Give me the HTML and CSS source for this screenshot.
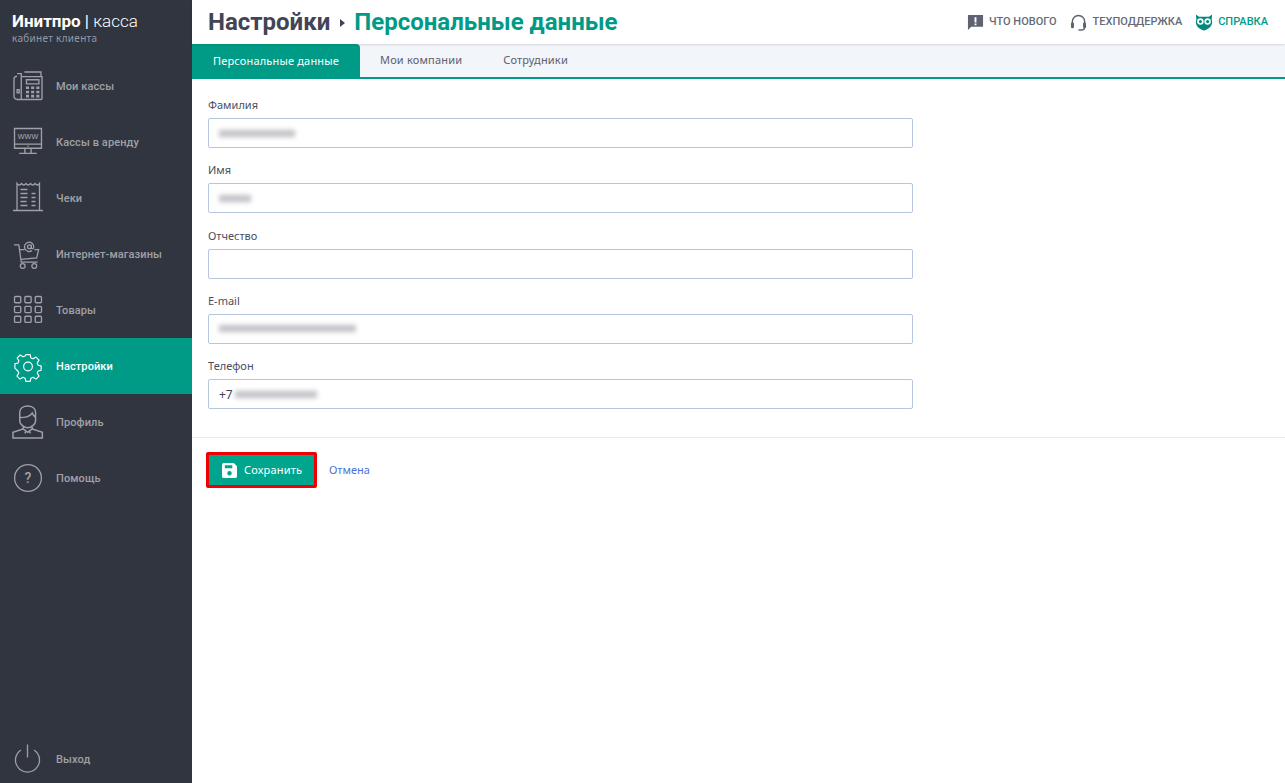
FILE: index.html
```html
<!DOCTYPE html>
<html lang="ru">
<head>
<meta charset="utf-8">
<title>Персональные данные</title>
<link rel="stylesheet" href="styles.css">
</head>
<body>
<div class="app">
  <aside class="sidebar">
    <div class="brand">
      <div class="brand-name"><b>Инитпро</b> <span class="brand-bar">|</span> <span class="brand-light">касса</span></div>
      <div class="brand-sub">кабинет клиента</div>
    </div>
    <nav class="nav">
      <a class="nav-item">
        <svg class="nav-icon" viewBox="2 3 27 27"><path d="M4 7.500h1M9 7.500h1M5 4.500h4v25H5a3 3 0 0 1-3-3V10a3 3 0 0 1 3-3M9 7.500h20v21a1 1 0 0 1-1 1H9M12 3h16v4.500M14 10.500h12v4H14z"/><path d="M5 20h2v3H5z"/><path class="fill" d="M13.500 17h3v2.500h-3zM18.500 17h3v2.500h-3zM23.500 17h3v2.500h-3zM13.500 21h3v2.500h-3zM18.500 21h3v2.500h-3zM23.500 21h3v2.500h-3zM13.500 25h3v2.500h-3zM18.500 25h3v2.500h-3zM23.500 25h3v2.500h-3z"/></svg>
        <span>Мои кассы</span>
      </a>
      <a class="nav-item">
        <svg class="nav-icon" viewBox="2 3 27 27"><path d="M2.500 3.500h26v19h-26zM2.500 18.500h26M12.500 22.500v5M18.500 22.500v5M7 27.500h17"/><path class="fill" d="M15 20h1.500v1H15z"/><text x="15.500" y="14" class="www">www</text></svg>
        <span>Кассы в аренду</span>
      </a>
      <a class="nav-item">
        <svg class="nav-icon" viewBox="2 4 28 28"><path d="M5 30V3.500c1.500 2 3 2 4.500 0 1.500 2 3 2 4.500 0 1.500 2 3 2 4.500 0 1.500 2 3 2 4.500 0 1.500 2 3 2 4.500 0V30M1 30.500h30M8.500 9.500h7M8.500 13.500h7M8.500 17.500h7M8.500 21.500h6M8.500 25.500h7M19.500 13.500h4M19.500 17.500h4M19.500 21.500h4M19.500 25.500h4"/></svg>
        <span>Чеки</span>
      </a>
      <a class="nav-item">
        <svg class="nav-icon" viewBox="1 0 29 29"><path d="M1 5h5l2.500 18h17M7 10h5M22 10h4.500l-2 8.500L8 20"/><circle cx="10" cy="27" r="2.500"/><circle cx="22" cy="27" r="2.500"/><circle cx="17" cy="7" r="2"/><path d="M19 5v3c0 1.500 2.500 1.500 2.500-1A4.800 4.800 0 1 0 19.500 11"/></svg>
        <span>Интернет-магазины</span>
      </a>
      <a class="nav-item">
        <svg class="nav-icon" viewBox="2 3 27 27"><rect x="2.500" y="3.500" width="6" height="6" rx="1"/><rect x="12.500" y="3.500" width="6" height="6" rx="1"/><rect x="22.500" y="3.500" width="6" height="6" rx="1"/><rect x="2.500" y="13" width="6" height="6" rx="1"/><rect x="12.500" y="13" width="6" height="6" rx="1"/><rect x="22.500" y="13" width="6" height="6" rx="1"/><rect x="2.500" y="22.500" width="6" height="6" rx="1"/><rect x="12.500" y="22.500" width="6" height="6" rx="1"/><rect x="22.500" y="22.500" width="6" height="6" rx="1"/></svg>
        <span>Товары</span>
      </a>
      <a class="nav-item active">
        <svg class="nav-icon" viewBox="0 -.5 32 32"><circle cx="16" cy="16" r="5"/><path d="M13.500 3h5l.8 3.800 2.500 1 3.300-2 3.500 3.500-2.100 3.300 1.100 2.500 3.400.8v5l-3.400.8-1.100 2.500 2.100 3.300-3.500 3.500-3.300-2.100-2.500 1-.8 3.600h-5l-.8-3.600-2.500-1-3.300 2.100-3.500-3.500 2.100-3.300-1.100-2.500L1 18.500v-5l3.500-.8 1.100-2.500-2.100-3.300L7 3.400l3.300 2.100 2.500-1z" stroke-linejoin="round" transform="translate(0 -.5)"/></svg>
        <span>Настройки</span>
      </a>
      <a class="nav-item">
        <svg class="nav-icon" viewBox="3.900 4.500 24.800 24.800"><path d="M9 13V8c0-7 14-7 14 0v8c0 3-4 6-7 6s-7-3-7-6v-3c4 0 9-1 11-4 1 2 2 3 3 4"/><path d="M12 21v2l-9 3v5h26v-5l-9-3v-2M12 23l4 3 4-3M14.500 25l-1 2M17.500 25l1 2"/></svg>
        <span>Профиль</span>
      </a>
      <a class="nav-item">
        <svg class="nav-icon" viewBox="2 2 28 28"><circle cx="16" cy="16" r="13.400"/><text x="16" y="21" class="qm">?</text></svg>
        <span>Помощь</span>
      </a>
    </nav>
    <a class="nav-item logout">
      <svg class="nav-icon" viewBox="1.500 3.500 28 28"><path d="M15 3v13M8.500 8.500a12 12 0 1 0 13 0"/></svg>
      <span>Выход</span>
    </a>
  </aside>

  <main class="main">
    <header class="topbar">
      <h1 class="crumbs">
        <span>Настройки</span>
        <svg class="crumb-arrow" viewBox="0 0 5 8"><path d="M0 0l5 4-5 4z"/></svg>
        <span class="crumb-current">Персональные данные</span>
      </h1>
      <div class="links">
        <a class="top-link">
          <svg class="top-icon" viewBox="0 0 18 18"><path d="M1 1h16v12.500H4.500L1 17z"/><path class="cut" d="M8 3.500h2v5.500H8zM8 10h2v2H8z"/></svg>
          <span>ЧТО НОВОГО</span>
        </a>
        <a class="top-link support">
          <svg class="top-icon" viewBox="0 0 18 18"><path class="line" d="M2.500 11V8a6.500 6.500 0 0 1 13 0v3M15.500 14c0 2-1.500 3-4 3H9"/><rect x="1" y="9" width="3.200" height="6" rx="1.200"/><rect x="13.800" y="9" width="3.200" height="6" rx="1.200"/></svg>
          <span>ТЕХПОДДЕРЖКА</span>
        </a>
        <a class="top-link help">
          <svg class="top-icon owl" viewBox="0 0 20 18"><path d="M1 0l3.500 2.500h11L19 0l-.5 6c2 5-1.500 10-8.500 12C3 16-.5 11 1.500 6z"/><circle class="owl-eye" cx="6" cy="8" r="3.600"/><circle class="owl-eye" cx="14" cy="8" r="3.600"/><circle cx="6" cy="8" r="1.700"/><circle cx="14" cy="8" r="1.700"/></svg>
          <span>СПРАВКА</span>
        </a>
      </div>
    </header>

    <div class="tabs">
      <a class="tab active">Персональные данные</a>
      <a class="tab">Мои компании</a>
      <a class="tab">Сотрудники</a>
    </div>

    <form class="form">
      <div class="field">
        <label class="label">Фамилия</label>
        <div class="input"><i class="blur blur-last"></i></div>
      </div>
      <div class="field">
        <label class="label">Имя</label>
        <div class="input"><i class="blur blur-first"></i></div>
      </div>
      <div class="field">
        <label class="label">Отчество</label>
        <div class="input"></div>
      </div>
      <div class="field">
        <label class="label">E-mail</label>
        <div class="input"><i class="blur blur-mail"></i></div>
      </div>
      <div class="field">
        <label class="label">Телефон</label>
        <div class="input"><span class="prefix">+7</span><i class="blur blur-phone"></i></div>
      </div>
    </form>

    <div class="actions">
      <button class="save" type="button">
        <svg class="save-icon" viewBox="0 0 16 16"><path fill-rule="evenodd" d="M2 0h10.500L16 3.500V14a2 2 0 0 1-2 2H2a2 2 0 0 1-2-2V2a2 2 0 0 1 2-2zM3 2.500v3h8v-3zM8 8.500a2.400 2.400 0 1 0 0 4.800 2.400 2.400 0 0 0 0-4.800z"/></svg>
        <span>Сохранить</span>
      </button>
      <a class="cancel">Отмена</a>
    </div>
  </main>
</div>
</body>
</html>
```
FILE: styles.css
```css
* { box-sizing: border-box; }
html, body { margin: 0; height: 100%; }
body { background: #fff; font-family: "Noto Sans", "Open Sans", sans-serif; color: #3f4254; }
.app { display: flex; height: 783px; overflow: hidden; }

.sidebar { width: 192px; flex: none; background: #31353f; display: flex; flex-direction: column; font-family: Roboto, sans-serif; }
.brand { height: 58px; padding: 11px 0 0 12px; }
.brand-name { font-size: 17px; line-height: 20px; color: #fff; white-space: nowrap; }
.brand-name b { font-weight: 700; }
.brand-bar { color: #fff; }
.brand-light { font-weight: 300; }
.brand-sub { font-size: 10px; line-height: 14px; color: #8f9aa8; letter-spacing: .3px; font-family: "Noto Sans", sans-serif; }
.nav { flex: 1; display: flex; flex-direction: column; }
.nav-item { height: 56px; display: flex; align-items: center; gap: 14px; padding-left: 14px; font-size: 11px; font-weight: 500; letter-spacing: .1px; color: #a0a1a8; flex: none; }
.nav-icon { width: 28px; height: 28px; fill: none; stroke: #a0a1a8; stroke-width: 1.300; flex: none; overflow: visible; }
.nav-icon .fill { fill: #a0a1a8; stroke: none; }
.www { font: 9px "Liberation Sans", sans-serif; fill: #a0a1a8; stroke: none; text-anchor: middle; }
.qm { font: 500 14px Roboto, sans-serif; fill: #a0a1a8; stroke: none; text-anchor: middle; }
.nav-item.active { background: #009b87; color: #fff; }
.active .nav-icon { stroke: #fff; }
.logout { padding-top: 8px; }

.main { flex: 1; min-width: 0; }
.topbar { height: 44px; display: flex; align-items: center; justify-content: space-between; padding: 0 17px 0 16px; box-shadow: 0 1px 2px rgba(0,0,0,.12); position: relative; }
.crumbs { margin: 0; display: flex; align-items: center; gap: 9.500px; font: 700 24px/28px Roboto, sans-serif; color: #414456; }
.crumb-arrow { width: 5px; height: 8px; fill: #414456; margin-top: 2px; }
.crumb-current { color: #009b87; font-weight: 700; }
.links { display: flex; gap: 13px; font: 500 11px/16px Roboto, sans-serif; color: #666a77; }
.top-link { display: flex; align-items: center; gap: 5px; }
.support { gap: 6px; }
.top-icon { width: 17px; height: 17px; fill: #5f6270; }
.top-icon .cut { fill: #fff; }
.top-icon .line { fill: none; stroke: #5f6270; stroke-width: 1.500; }
.help { color: #009b87; }
.owl { width: 18px; fill: #00897b; }
.owl .owl-eye { fill: #fff; }

.tabs { height: 35px; display: flex; background: #f2f5f9; border-bottom: 2px solid #009b87; font-size: 11px; letter-spacing: .18px; }
.tab { padding: 0 21px 3px 20px; display: flex; align-items: center; color: #5c6070; }
.tab.active { width: 168px; justify-content: center; padding: 0 0 3px; margin-bottom: -2px; height: 35px; background: #009b87; color: #fff; border-top-right-radius: 4px; }

.form { padding: 17px 0 0 16px; width: 721px; display: flex; flex-direction: column; gap: 13.250px; }
.label { display: block; font-size: 11px; line-height: 18px; margin-bottom: 4px; color: #4b4e5e; }
.input { height: 30px; border: 1px solid #b6c6df; border-radius: 2px; display: flex; align-items: center; padding: 0 10px; font-size: 12px; color: #3f4254; background: #fff; }
.prefix { margin-right: 2px; }
.blur { display: block; height: 7px; background: #c0c0c6; filter: blur(2.500px); }
.blur-last { width: 76px; }
.blur-first { width: 32px; }
.blur-mail { width: 137px; }
.blur-phone { width: 82px; }

.actions { margin-top: 28px; border-top: 1px solid #e8e9ec; padding: 14px 0 0 14px; display: flex; align-items: center; gap: 12px; }
.save { width: 111px; height: 36px; border: 3px solid #f00000; border-radius: 2px; background: #00a58e; color: #fff; display: flex; align-items: center; gap: 7px; padding: 0 0 2px 13px; font: 11px "Noto Sans", sans-serif; letter-spacing: .2px; }
.save-icon { width: 15px; height: 15px; fill: #fff; flex: none; margin-top: 2px; }
.cancel { font-size: 11px; color: #4a72d6; margin-top: -2px; }
```
